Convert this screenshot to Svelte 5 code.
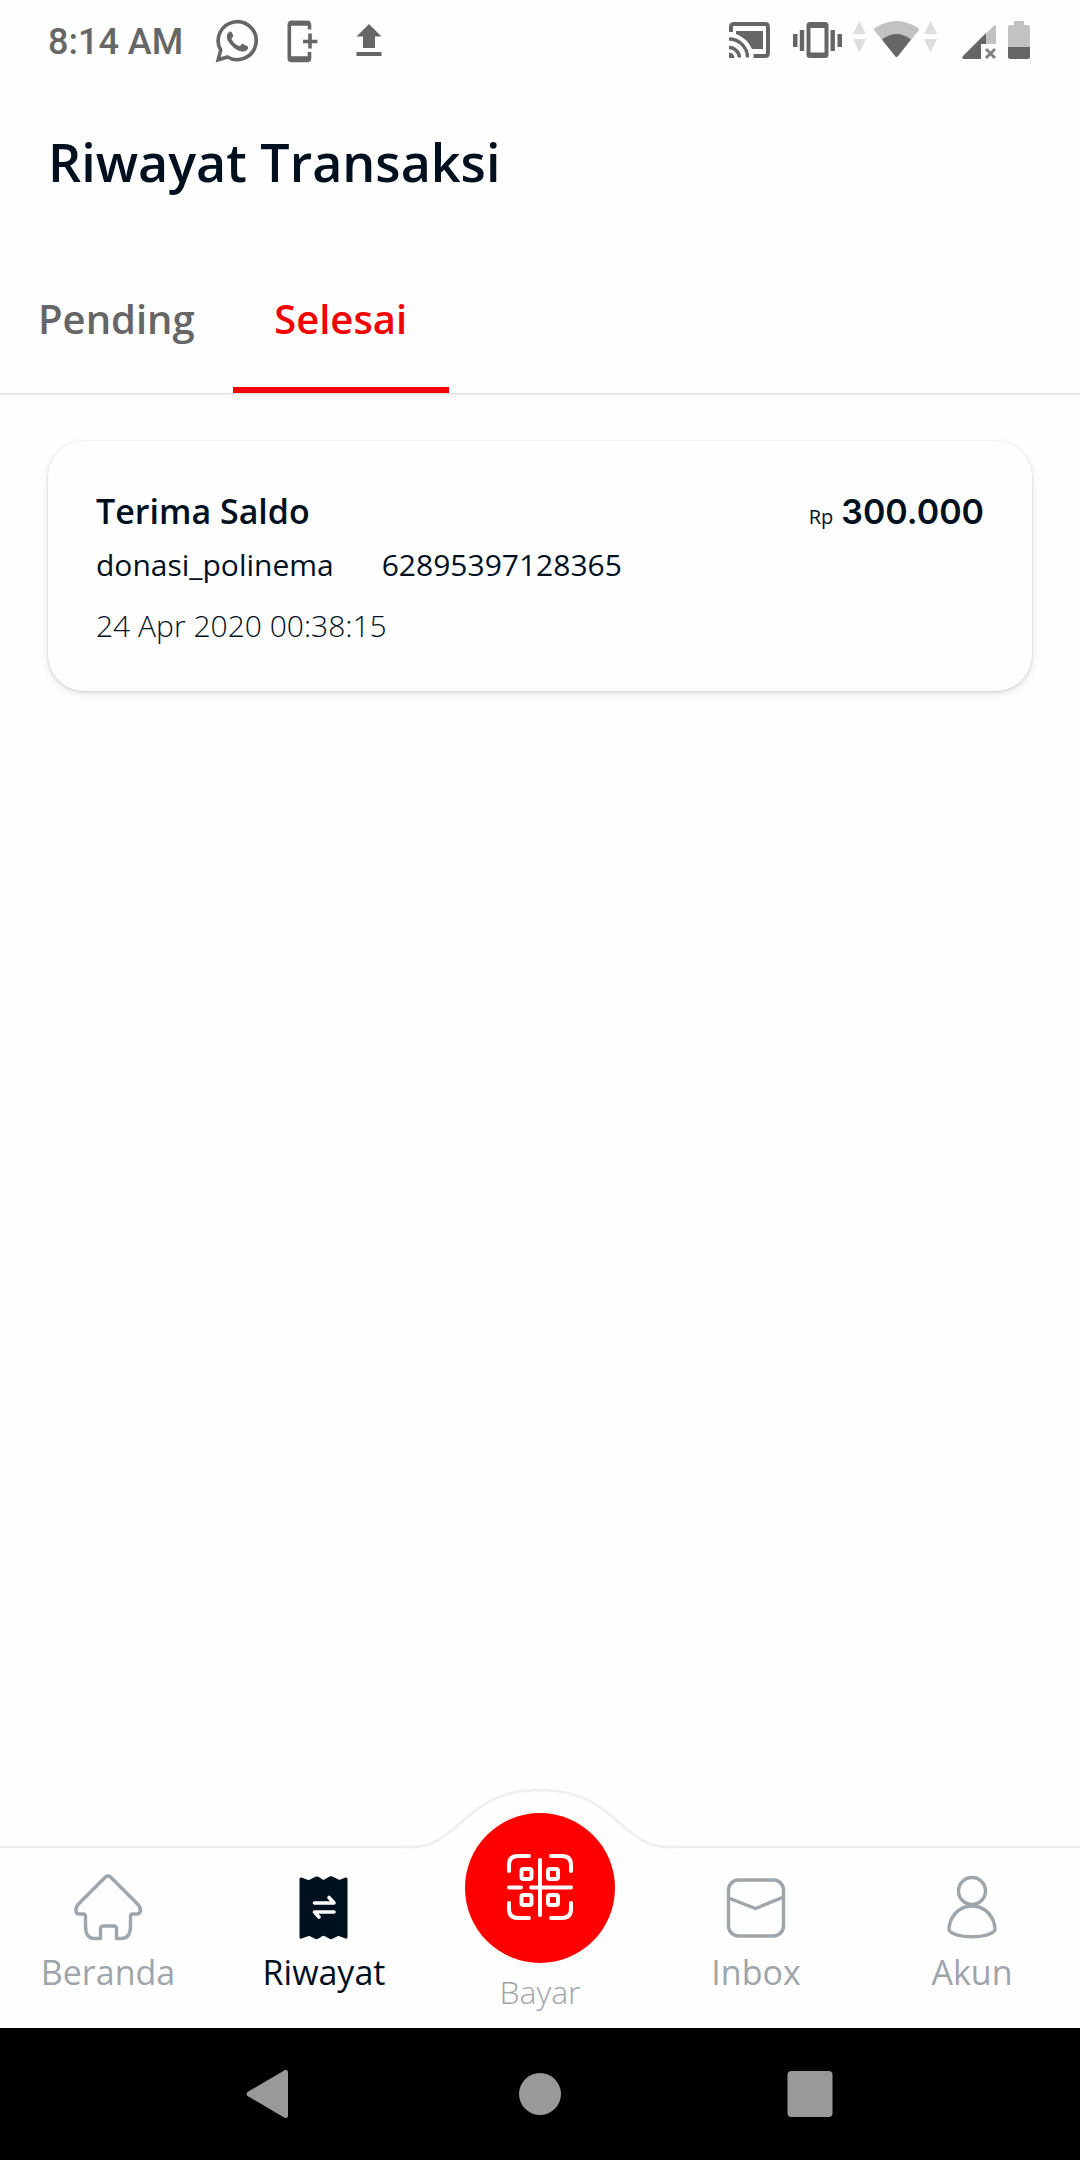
<script>
  const tabs = ['Pending', 'Selesai'];
  let activeTab = $state('Selesai');
  const transactions = [
    { title: 'Terima Saldo', name: 'donasi_polinema', phone: '62895397128365', amount: '300.000', date: '24 Apr 2020 00:38:15' }
  ];
</script>

<div class="screen">
  <div class="status">
    <div class="status-left">
      <span class="clock">8:14 AM</span>
      <svg width="48" height="48" viewBox="0 0 48 48" fill="none">
        <path d="M5.200 41.800l2.500-9.700A19 19 0 1 1 14.500 39z" stroke="#666" stroke-width="3.600" />
        <path d="M16 14.200c-3.600 2.600-2.600 7.600 1.700 12.300 5 5.600 11.300 8.700 15.300 6.300 2-1.300 2.400-2.700 2.100-4l-5-2.900c-.9-.5-1.300-.2-2.600 1.600-.7.800-1.300.7-2.600 0-2.800-1.400-4.700-3.300-6-5.800-.5-1-.3-1.400.4-2.100 1-1.100 1.100-1.600.8-2.400l-1.500-3.200c-.5-.8-1.600-.7-2.600.2z" fill="#666" />
      </svg>
      <svg width="48" height="48" viewBox="0 0 48 48" fill="none" stroke="#666">
        <path d="M30.500 11.500V7c0-1.700-1-2.500-2.500-2.500H12.500C11 4.500 10.300 5.300 10.300 7v33c0 1.700.7 2.500 2.200 2.500H28c1.500 0 2.500-.8 2.500-2.500v-6" stroke-width="3.600" />
        <path d="M10.500 5.200h20M10.500 40.800h20" stroke-width="5" />
        <path d="M24 23.500h14.500M31 15.500v15" stroke-width="3.600" />
      </svg>
      <svg width="48" height="48" viewBox="0 0 48 48" fill="#666">
        <path d="M24 6L36.500 18.500H30V30H18V18.500H11.500zM11.500 34h25v4h-25z" />
      </svg>
    </div>
    <div class="status-right">
      <svg width="56" height="48" viewBox="0 0 56 48">
        <g fill="none" stroke="#666" stroke-width="4">
          <path d="M5 14V9q0-3 3-3h31q3 0 3 3v26q0 3-3 3H27.500" />
          <path d="M3 21A18.500 18.500 0 0 1 21.500 39.500M3 29.500A10.500 10.500 0 0 1 13.500 39.500" stroke-width="3.400" />
        </g>
        <path d="M3 34.500a5.500 5.500 0 0 1 5.500 5.500H3zM10 13h27v18H26Q21 20 10 16z" fill="#666" />
      </svg>
      <svg width="52" height="48" viewBox="0 0 52 48" fill="#666">
        <path d="M20 4h15q3.500 0 3.500 3.500v29q0 3.500-3.500 3.500H20q-3.500 0-3.500-3.500v-29Q16.500 4 20 4zM20.500 10v24.500h14V10zM3 16h4.500v13H3zM9.800 12h4.400v21H9.800zM40.500 12h4.400v21h-4.400zM47.500 16H52v13h-4.500z" fill-rule="evenodd" />
      </svg>
      <svg width="100" height="48" viewBox="0 0 100 48">
        <path d="M9.500 3L16 16H3zM3 21h13L9.500 34.500zM80.500 3L87 16H74zM74 21h13l-6.500 13.500z" fill="#dedede" />
        <path d="M24 10.500Q46.500-4.500 69 10.500V12L48 38q-1.500 2-3 0L24 12z" fill="#c2c2c2" />
        <path d="M32 21.500Q46.500 10.500 61 21.500L48 38q-1.500 2-3 0z" fill="#666" />
      </svg>
      <svg width="42" height="48" viewBox="0 0 42 48">
        <path d="M28 15.500L36 7.500q2-1 2 1V26H28z" fill="#c2c2c2" />
        <path d="M28 15v11h-5v15H6q-3-1-1-3z" fill="#666" />
        <path d="M28 31l9 9M37 31l-9 9" stroke="#808080" stroke-width="3" />
      </svg>
      <svg width="24" height="48" viewBox="0 0 24 48">
        <path d="M6 3h10v4h4q2 0 2 2v20H0V9q0-2 2-2h4z" fill="#c2c2c2" />
        <path d="M0 29h22v10q0 2-2 2H2q-2 0-2-2z" fill="#666" />
      </svg>
    </div>
  </div>

  <header><h1>Riwayat Transaksi</h1></header>

  <div class="tabs" role="tablist">
    {#each tabs as tab}
      <button role="tab" aria-selected={activeTab === tab} class:active={activeTab === tab} onclick={() => (activeTab = tab)}>{tab}</button>
    {/each}
  </div>

  <main>
    {#each transactions as t}
      <article>
        <div class="row">
          <h2>{t.title}</h2>
          <p class="amount"><small>Rp</small><strong>{t.amount}</strong></p>
        </div>
        <p class="party"><span>{t.name}</span><span>{t.phone}</span></p>
        <p class="date">{t.date}</p>
      </article>
    {/each}
  </main>

  <nav>
    <svg class="bump" width="280" height="62" viewBox="0 0 280 62">
      <path d="M0 59H12C60 59 64 2 140 2S220 59 268 59H280V62H0z" fill="#fefefe" />
      <path d="M0 59H12C60 59 64 2 140 2S220 59 268 59H280" fill="none" stroke="#eeeef3" stroke-width="2.500" />
    </svg>
    <div class="items">
      <a href="#beranda">
        <svg width="74" height="74" viewBox="0 0 74 74" fill="none" stroke="#9ea5ab" stroke-width="3.400" stroke-linejoin="round">
          <path d="M34.500 7q2.500-2.500 5 0L67 34.500q3 3.500 2.300 7-.5 2.500-3 2.500h-4.500q-2.300 0-2.300 2.500V56q0 12.500-9 12.500H45.500V59q0-3-3-3h-10q-3 0-3 3v9.500H23q-8.500 0-8.500-12.500V46.500q0-2.500-2.300-2.500H8q-3 0-3-3-.5-3.500 2-6.500z" />
        </svg>
        <span>Beranda</span>
      </a>
      <a href="#riwayat" class="current" aria-current="page">
        <svg width="74" height="74" viewBox="0 0 74 74">
          <path d="M12.500 9q0-2 2-1.500l6 2.300q1 .4 2 0l6-3q1.500-.7 3 0l4 2.600q1 .7 2 0l5-2.800q1.500-.7 3 0l6 3q1 .4 2 0l5-2q2-.6 2 1.500v58q0 2-2 1.500l-6-2.300q-1-.4-2 0l-5 2.500q-1.500.8-3 0l-5-2.700q-1-.6-2 0l-4.500 2.700q-1.500.8-3 0l-5-2.500q-1-.4-2 0l-6.500 2.300q-2 .5-2-1.500z" fill="#00101f" />
          <path d="M27.500 33H47L42 27.500M47 42H27.500L32 47" fill="none" stroke="#fff" stroke-width="3.600" stroke-linecap="round" stroke-linejoin="round" />
        </svg>
        <span>Riwayat</span>
      </a>
      <a href="#bayar" class="pay">
        <svg width="150" height="150" viewBox="0 0 150 150" fill="none" stroke="#fff" stroke-width="4" stroke-linecap="round">
          <circle cx="75" cy="75" r="75" fill="#f00" stroke="none" />
          <path d="M44 58V52q0-9 9-9H64M86 43H97q9 0 9 9v6M44 90v6q0 9 9 9H64M86 105H97q9 0 9-9V90M75 47v55M44 74.500H56M66 74.500h40" />
          <rect x="56.500" y="56" width="10" height="10" rx="2" />
          <rect x="83" y="56" width="10" height="10" rx="2" />
          <rect x="56.500" y="82" width="10" height="10" rx="2" />
          <rect x="83" y="82" width="10" height="10" rx="2" />
        </svg>
        <span>Bayar</span>
      </a>
      <a href="#inbox">
        <svg width="74" height="74" viewBox="0 0 74 74" fill="none" stroke="#9ea5ab" stroke-width="3.400" stroke-linejoin="round">
          <rect x="9.500" y="10" width="55" height="56" rx="10" />
          <path d="M9.500 28L36.500 38.500 64.500 27" />
        </svg>
        <span>Inbox</span>
      </a>
      <a href="#akun">
        <svg width="74" height="74" viewBox="0 0 74 74" fill="none" stroke="#9ea5ab" stroke-width="3.400" stroke-linejoin="round">
          <circle cx="37" cy="21" r="13.500" />
          <path d="M37 36C23 36 14 48 14 60c5 9 41 9 46 0C60 48 51 36 37 36z" />
        </svg>
        <span>Akun</span>
      </a>
    </div>
  </nav>

  <div class="system">
    <button aria-label="Back">
      <svg width="48" height="48" viewBox="0 0 48 48"><path d="M39 0q3-.5 3 2.500v43q0 3-3 2.500L1.500 26q-2-2 0-4z" fill="#999" /></svg>
    </button>
    <button aria-label="Home">
      <svg width="48" height="48" viewBox="0 0 48 48"><circle cx="24" cy="24" r="21" fill="#999" /></svg>
    </button>
    <button aria-label="Recents">
      <svg width="48" height="48" viewBox="0 0 48 48"><rect x="1.500" y="1" width="45" height="46" rx="4" fill="#999" /></svg>
    </button>
  </div>
</div>

<style>
  :global(body) { margin: 0; background: #fefefe; }
  .screen {
    min-height: 100vh;
    display: flex;
    flex-direction: column;
    background: #fefefe;
    color: #00101f;
    font-family: "Open Sans", "Noto Sans", sans-serif;
  }
  svg { display: block; flex: none; }
  h1, h2, p { margin: 0; }
  button { border: 0; background: none; padding: 0; font: inherit; color: inherit; }
  .status { display: flex; justify-content: space-between; align-items: center; padding: 18px 48px 16px; }
  .status-left { display: flex; align-items: center; gap: 18px; }
  .status-right { display: flex; align-items: center; gap: 8px; }
  .clock { font: 500 36px/48px Roboto, sans-serif; color: #666; padding-right: 12px; }
  header { padding: 44px 48px; }
  h1 { font-size: 52px; line-height: 72px; font-weight: 600; }
  .tabs {
    display: flex;
    height: 151px;
    box-shadow: 0 1px 1px #dedede, 0 4px 4px #f4f4f4;
  }
  .tabs button {
    box-sizing: border-box;
    min-width: 216px;
    padding: 8px 38px 0;
    border-bottom: 6px solid transparent;
    font-size: 40px;
    font-weight: 600;
    color: #666;
  }
  .tabs button.active { color: #f50000; border-color: #f50000; }
  main { flex: 1; padding: 48px; }
  article {
    padding: 46px 48px 40px;
    border-radius: 36px;
    background: #fefefe;
    box-shadow: 0 1px 3px #ccc, 0 3px 8px #ececec;
  }
  .row { display: flex; justify-content: space-between; align-items: baseline; }
  h2 { font-size: 34px; line-height: 48px; font-weight: 600; }
  .amount { display: flex; align-items: baseline; gap: 8px; line-height: 48px; }
  small { font-size: 20px; }
  strong { font-family: Inter, sans-serif; font-size: 34px; font-weight: 600; }
  .party { display: flex; gap: 48px; font-size: 30px; line-height: 48px; }
  .date { margin-top: 12px; font-size: 30px; line-height: 50px; font-weight: 300; }
  nav { position: relative; border-top: 2px solid #eeeef3; padding-top: 11px; }
  .bump { position: absolute; left: 50%; top: -60px; margin-left: -140px; }
  .items {
    display: grid;
    grid-template-columns: repeat(5, 1fr);
    align-items: end;
    border-top: 1px solid #f8f8f8;
    padding-top: 10px;
  }
  a {
    position: relative;
    display: flex;
    flex-direction: column;
    align-items: center;
    gap: 4px;
    padding-bottom: 32px;
    font-size: 34px;
    line-height: 48px;
    color: #9ea5ab;
    text-decoration: none;
  }
  a.current { color: #00101f; }
  a.pay { margin-top: -60px; padding-bottom: 16px; gap: 9px; font-size: 32px; line-height: 40px; font-weight: 300; }
  .system { display: grid; grid-template-columns: repeat(3, 25%); justify-content: center; height: 132px; background: #000; }
  .system button { display: grid; place-items: center; }
</style>
